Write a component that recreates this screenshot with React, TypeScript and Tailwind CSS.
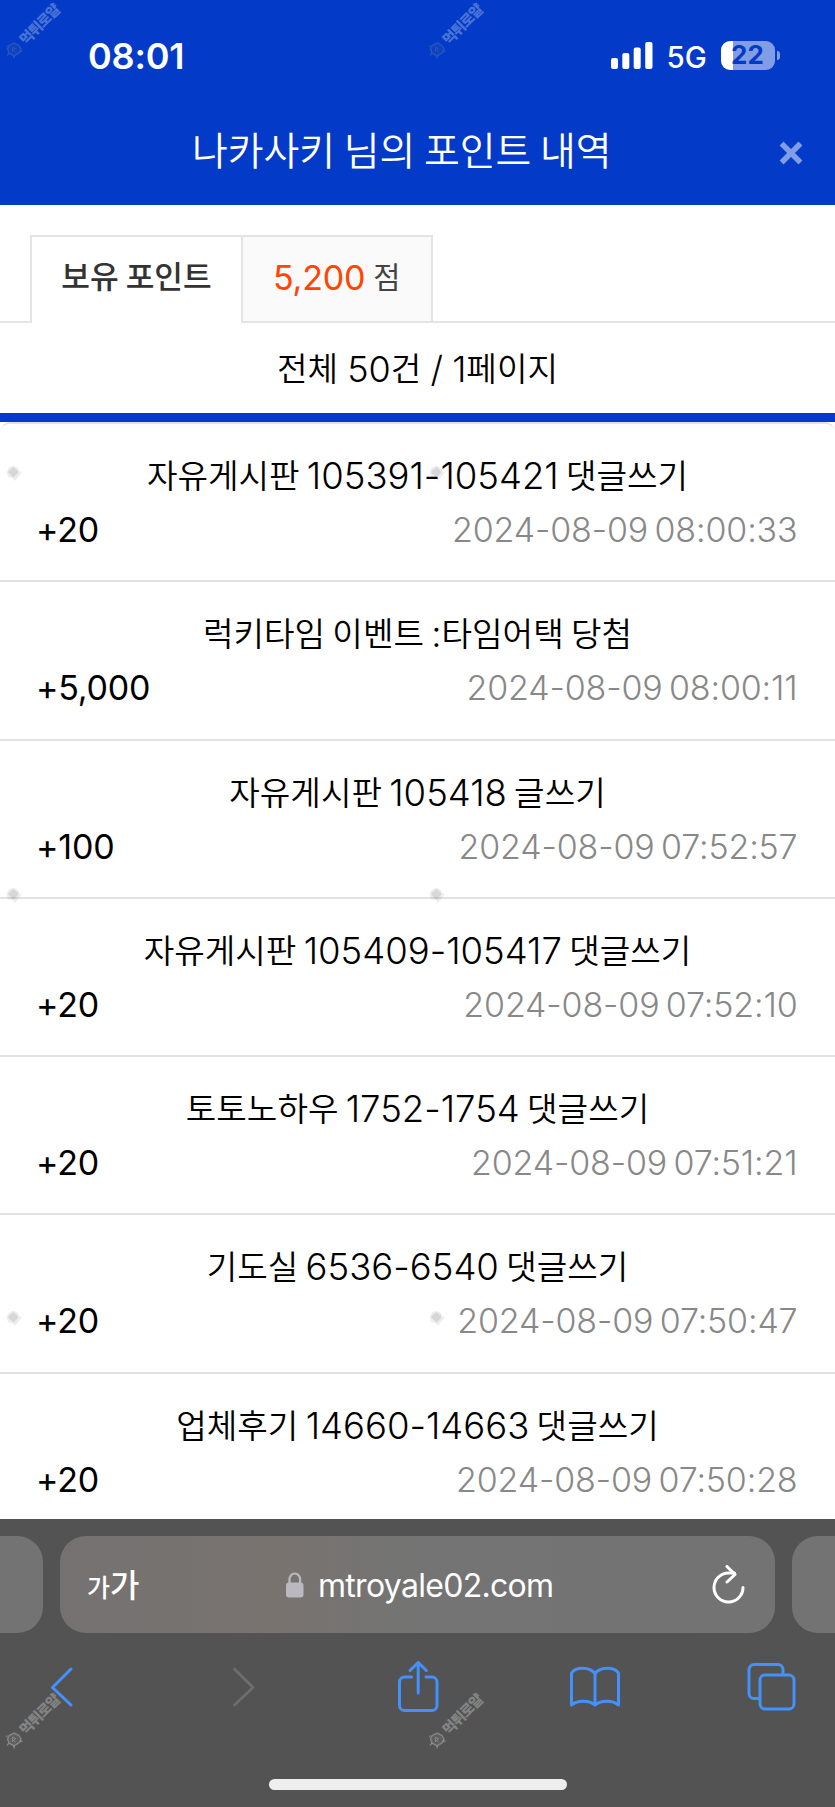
import React from "react";

type Row = { title: string; points: string; date: string };

const rows: Row[] = [
  { title: "자유게시판 105391-105421 댓글쓰기", points: "+20", date: "2024-08-09 08:00:33" },
  { title: "럭키타임 이벤트 :타임어택 당첨", points: "+5,000", date: "2024-08-09 08:00:11" },
  { title: "자유게시판 105418 글쓰기", points: "+100", date: "2024-08-09 07:52:57" },
  { title: "자유게시판 105409-105417 댓글쓰기", points: "+20", date: "2024-08-09 07:52:10" },
  { title: "토토노하우 1752-1754 댓글쓰기", points: "+20", date: "2024-08-09 07:51:21" },
  { title: "기도실 6536-6540 댓글쓰기", points: "+20", date: "2024-08-09 07:50:47" },
  { title: "업체후기 14660-14663 댓글쓰기", points: "+20", date: "2024-08-09 07:50:28" },
];

/** Sets Hangul runs in the Korean face, slightly smaller than the Latin digits. */
function Mixed({ text }: { text: string }) {
  return (
    <>
      {text.split(/([가-힣]+)/).map((part, i) =>
        /[가-힣]/.test(part) ? (
          <span key={i} className="relative -top-px font-['Noto_Sans_CJK_KR',sans-serif] text-[33.200px] leading-none font-[350]">
            {part}
          </span>
        ) : (
          <span key={i}>{part}</span>
        ),
      )}
    </>
  );
}

function Watermark({ className, tone, mark }: { className: string; tone: string; mark: string }) {
  return (
    <div className={`pointer-events-none absolute h-[60px] w-[64px] ${className}`}>
      <svg className={`absolute left-[5px] top-[41px] size-[18px] ${mark}`} viewBox="0 0 18 18" fill="none" stroke="currentColor">
        <path d="M9 2l5 2.5 2 3.5-1.500 3.500 L9 15l-5-3-1.500-4L4 4.500z" fill="currentColor" fillOpacity=".3" strokeWidth="1.500" />
        <path d="M2.500 5.500L1 5M15 10l2.500.5M9 15l.5 2.500M4 12l-2 2.500" strokeWidth="1.500" />
        <path d="M7.500 11V6.500l3 1-2 2 2 1.500" strokeWidth="1" />
      </svg>
      <span
        className={`absolute left-[12px] top-[17px] w-[54px] -rotate-45 text-center font-['Noto_Sans_CJK_KR',sans-serif] text-[14.500px] leading-[14px] font-black tracking-[-0.9px] whitespace-nowrap ${tone}`}
      >
        먹튀로얄
      </span>
    </div>
  );
}

/** The stamp as it shows on white: only its seal remains visible. */
function Seal({ className }: { className: string }) {
  return (
    <svg className={`pointer-events-none absolute size-[18px] text-black ${className}`} viewBox="0 0 18 18" fill="currentColor">
      <path d="M8.500 1.500L13 4l1.500 3.500 2.500.5-3.500 4.500L10 17l-2-2.500L3 13 1.500 8 4 3.500z" opacity=".07" />
      <path d="M8.500 3L13 7v2l-4.500 4.500L3.500 9V7z" opacity=".09" />
    </svg>
  );
}

function StatusBar() {
  return (
    <div className="flex h-[104px] items-start pt-[32px] text-white">
      <div className="ml-[88px] w-[100px] text-[36px] leading-[48px] font-semibold tracking-[-0.2px]">08:01</div>
      <svg className="ml-[423px] mt-[10px] h-[28px] w-[43px]" viewBox="0 0 43 28" fill="currentColor">
        <rect x="0" y="16" width="7" height="11" rx="2" />
        <rect x="11.300" y="11" width="7" height="16" rx="2" />
        <rect x="22.700" y="5.500" width="7" height="21.500" rx="2" />
        <rect x="34.200" y="0" width="7.300" height="27" rx="2" />
      </svg>
      <div className="ml-[12.500px] w-[40px] text-[29.500px] leading-[50px] font-medium">5G</div>
      <div className="ml-[14px] mt-[8.500px] flex items-center">
        <div className="flex h-[29px] w-[54px] items-center justify-center rounded-[9px] bg-[linear-gradient(90deg,#fff_12px,#829de5_12px)] text-[26px] leading-none font-bold text-[#033bc8]">
          22
        </div>
        <div className="ml-[2px] h-[9px] w-[3px] rounded-r-full bg-[#829de5]" />
      </div>
    </div>
  );
}

export default function App() {
  return (
    <div className="relative flex h-[1807px] w-[835px] flex-col overflow-hidden bg-white font-['Inter','Noto_Sans_CJK_KR',sans-serif] text-black">
      <header className="h-[205px] shrink-0 bg-[#033bc8]">
        <StatusBar />
        <div className="flex h-[96px] items-center pt-px">
          <h1 className="ml-[192px] w-[580px] pb-[9px] font-['Noto_Sans_CJK_KR',sans-serif] text-[38.900px] leading-[60px] font-[350] whitespace-nowrap text-white">
            나카사키 님의 포인트 내역
          </h1>
          <svg className="ml-[7px] size-[24px] text-[#829de5]" viewBox="0 0 24 24" stroke="currentColor" strokeWidth="5.500" strokeLinecap="square">
            <path d="M4.500 4.500l15 15M19.500 4.500l-15 15" />
          </svg>
        </div>
      </header>

      <div className="flex h-[118px] shrink-0 items-end">
        <div className="h-[2px] w-[30px] bg-[#e3e5e7]" />
        <div className="flex h-[88px] w-[213px] items-center justify-center border-t-2 border-r-2 border-l-2 border-[#e2e5e8] pb-[9px] font-['Noto_Sans_CJK_KR',sans-serif] text-[31.200px] font-medium text-[#333]">
          보유 포인트
        </div>
        <div className="flex h-[88px] w-[190px] items-center gap-[8px] border-t-2 border-r-2 border-b-2 border-[#e4e4e4] bg-[#fafafa] pb-[3px] pl-[30px]">
          <span className="text-[34px] leading-none tracking-[-0.2px] text-[#ff4500]">5,200</span>
          <span className="pb-[4px] font-['Noto_Sans_CJK_KR',sans-serif] text-[29.500px] leading-none text-[#444]">점</span>
        </div>
        <div className="h-[2px] flex-1 bg-[#e4e4e4]" />
      </div>

      <div className="h-[90px] shrink-0 text-center text-[36px] leading-[92px] font-light [word-spacing:-1px]">
        <Mixed text="전체 50건 / 1페이지" />
      </div>
      <div className="h-[9px] shrink-0 bg-[#033bc8]" />

      <main className="h-[1097px] shrink-0 overflow-hidden rounded-t-[10px] border-t-2 border-[#e2e2e2]">
        {rows.map((row) => (
          <section key={row.title} className="h-[158.300px] border-b-2 border-[#e2e2e2] pt-[25px]">
            <h2 className="h-[54px] text-center text-[36.500px] leading-[54px] font-light whitespace-nowrap [word-spacing:-3px]">
              <Mixed text={row.title} />
            </h2>
            <div className="flex h-[54px] justify-between pr-[37.500px] pl-[36px] text-[34px] leading-[54px]">
              <span className="tracking-[-0.2px]">{row.points}</span>
              <time className="font-light tracking-[-0.150px] text-[#888] [word-spacing:-3px]">{row.date}</time>
            </div>
          </section>
        ))}
      </main>

      <footer className="flex min-h-0 flex-1 flex-col bg-[#535353]">
        <div className="flex h-[114px] items-end gap-[17px] text-white">
          <div className="h-[97px] w-[43px] rounded-r-[26px] bg-[#737373]" />
          <div className="flex h-[97px] w-[715px] items-center rounded-[26px] bg-[linear-gradient(90deg,#747271,#797370_30%,#737473_50%,#737373)]">
            <div className="ml-[27px] flex w-[60px] items-baseline pb-[3px] font-['Noto_Sans_CJK_KR',sans-serif] leading-none font-medium">
              <span className="text-[25px]">가</span>
              <span className="text-[32px]">가</span>
            </div>
            <svg className="ml-[139px] h-[26px] w-[18px] text-[#bbb9c0]" viewBox="0 0 18 26" fill="none">
              <rect x="0" y="10.500" width="17.500" height="15" rx="3" fill="currentColor" />
              <path d="M3.500 12V7.500a5.300 6 0 0 1 10.600 0V12" stroke="currentColor" strokeWidth="2.200" />
            </svg>
            <div className="ml-[14px] w-[240px] pt-[2px] text-[32px] leading-none tracking-[-0.7px]">mtroyale02.com</div>
            <svg className="ml-[152px] h-[40px] w-[36px]" viewBox="0 0 36 40" fill="none" stroke="currentColor" strokeWidth="3" strokeLinecap="round" strokeLinejoin="round">
              <path d="M33 22.500a14.500 14.500 0 1 1-14.500-14.500h6" />
              <path d="M17 1.500l8 8-8 7.500" />
            </svg>
          </div>
          <div className="h-[97px] w-[43px] rounded-l-[26px] bg-[#737373]" />
        </div>
        <nav className="flex h-[110px] items-center pb-[2px] text-[#4491fb]">
          <svg className="ml-[49px] h-[44px] w-[26px]" viewBox="0 0 26 44" fill="none" stroke="currentColor" strokeWidth="3" strokeLinecap="round" strokeLinejoin="round">
            <path d="M22 4L3.500 22.500l18.500 17.500" />
          </svg>
          <svg className="ml-[156px] h-[44px] w-[26px] text-[#6d6d6d]" viewBox="0 0 26 44" fill="none" stroke="currentColor" strokeWidth="3" strokeLinecap="round" strokeLinejoin="round">
            <path d="M3.500 4l18.500 18.500-18.500 17.500" />
          </svg>
          <svg className="ml-[139px] h-[54px] w-[44px]" viewBox="0 0 44 54" fill="none" stroke="currentColor" strokeWidth="3" strokeLinecap="round" strokeLinejoin="round">
            <path d="M15.500 17H8.500a5 5 0 0 0-5 5v23.500a5 5 0 0 0 5 5h27.500a5 5 0 0 0 5-5V22a5 5 0 0 0-5-5h-6" />
            <path d="M22.200 33V2.500M14 10.500l8.200-8 8.200 8" />
          </svg>
          <svg className="ml-[128px] h-[44px] w-[54px]" viewBox="0 0 54 44" fill="none" stroke="currentColor" strokeWidth="3" strokeLinecap="round" strokeLinejoin="round">
            <path d="M27 8.500C21.500 1.500 8 1.500 3.500 8v32c6-5 17.500-5 23.500 0 6-5 17.500-5 23.500 0V8C46 1.500 32.500 1.500 27 8.500zM27 8.500v31.500" />
          </svg>
          <svg className="ml-[125px] size-[50px]" viewBox="0 0 50 50" fill="none" stroke="currentColor" strokeWidth="3" strokeLinejoin="round">
            <rect x="13" y="13" width="34" height="34" rx="5" />
            <path d="M36 12.500V7.500a5 5 0 0 0-5-5H7a5 5 0 0 0-5 5v24a5 5 0 0 0 5 5h6" />
          </svg>
        </nav>
        <div className="mt-[36px] ml-[269px] h-[11px] w-[298px] rounded-full bg-[#eee]" />
      </footer>

      <Watermark className="top-0 left-0" tone="text-white/30" mark="text-[#3c62b0]/60" />
      <Watermark className="top-0 left-[423px]" tone="text-white/30" mark="text-[#3c62b0]/60" />
      <Seal className="top-[464px] left-[5px]" />
      <Seal className="top-[464px] left-[428px]" />
      <Seal className="top-[886px] left-[5px]" />
      <Seal className="top-[886px] left-[428px]" />
      <Seal className="top-[1309px] left-[5px]" />
      <Seal className="top-[1309px] left-[428px]" />
      <Watermark className="top-[1690px] left-0" tone="text-white/30" mark="text-white/25" />
      <Watermark className="top-[1690px] left-[423px]" tone="text-white/30" mark="text-white/25" />
    </div>
  );
}
